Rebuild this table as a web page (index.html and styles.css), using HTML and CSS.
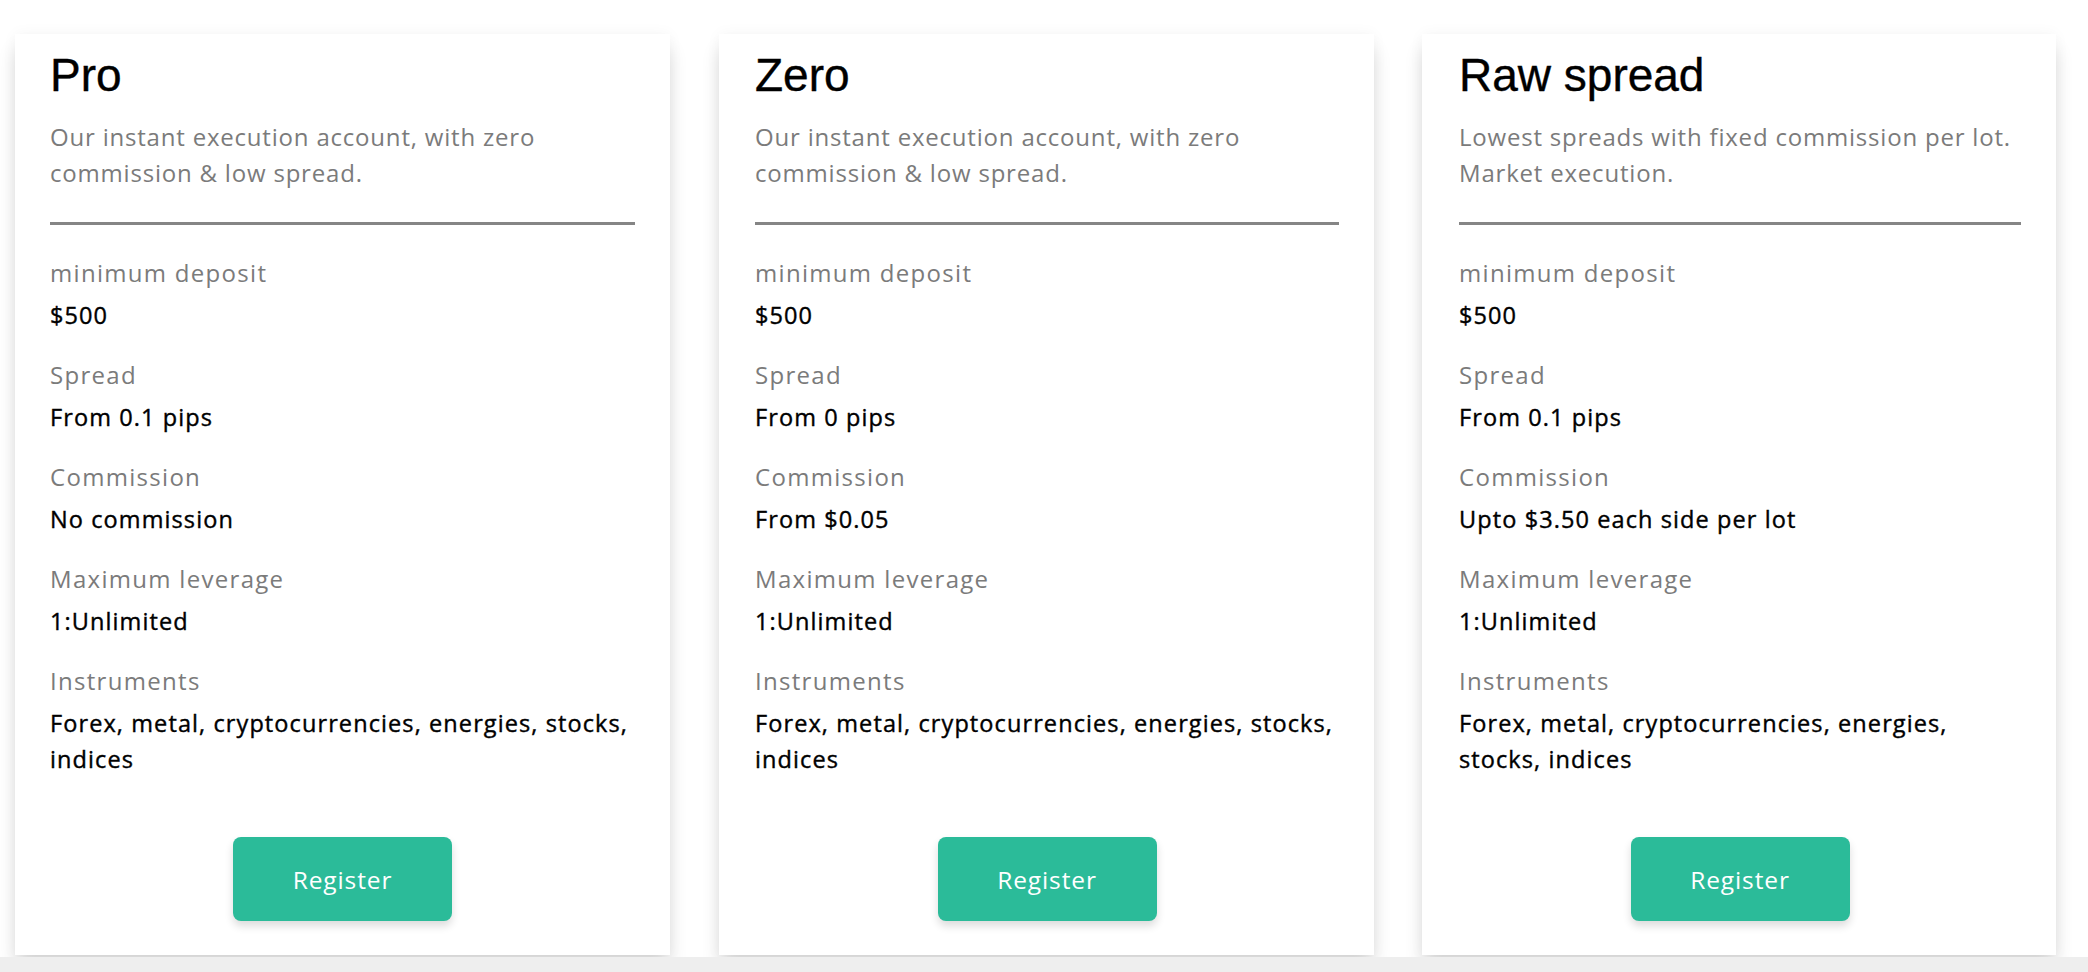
FILE: index.html
```html
<!DOCTYPE html>
<html lang="en">
<head>
<meta charset="utf-8">
<title>Accounts</title>
<link rel="stylesheet" href="styles.css">
</head>
<body>
<main class="cards">
  <section class="card">
    <h2 class="card-title">Pro</h2>
    <p class="card-desc">Our instant execution account, with zero commission &amp; low spread.</p>
    <hr class="card-rule">
    <dl class="specs">
      <dt class="spec-label">minimum deposit</dt>
      <dd class="spec-value">$500</dd>
      <dt class="spec-label">Spread</dt>
      <dd class="spec-value">From 0.1 pips</dd>
      <dt class="spec-label">Commission</dt>
      <dd class="spec-value">No commission</dd>
      <dt class="spec-label">Maximum leverage</dt>
      <dd class="spec-value">1:Unlimited</dd>
      <dt class="spec-label">Instruments</dt>
      <dd class="spec-value">Forex, metal, cryptocurrencies, energies, stocks, indices</dd>
    </dl>
    <div class="card-actions"><a class="btn" href="#">Register</a></div>
  </section>
  <section class="card">
    <h2 class="card-title">Zero</h2>
    <p class="card-desc">Our instant execution account, with zero commission &amp; low spread.</p>
    <hr class="card-rule">
    <dl class="specs">
      <dt class="spec-label">minimum deposit</dt>
      <dd class="spec-value">$500</dd>
      <dt class="spec-label">Spread</dt>
      <dd class="spec-value">From 0 pips</dd>
      <dt class="spec-label">Commission</dt>
      <dd class="spec-value">From $0.05</dd>
      <dt class="spec-label">Maximum leverage</dt>
      <dd class="spec-value">1:Unlimited</dd>
      <dt class="spec-label">Instruments</dt>
      <dd class="spec-value">Forex, metal, cryptocurrencies, energies, stocks, indices</dd>
    </dl>
    <div class="card-actions"><a class="btn" href="#">Register</a></div>
  </section>
  <section class="card">
    <h2 class="card-title">Raw spread</h2>
    <p class="card-desc">Lowest spreads with fixed commission per lot. Market execution.</p>
    <hr class="card-rule">
    <dl class="specs">
      <dt class="spec-label">minimum deposit</dt>
      <dd class="spec-value">$500</dd>
      <dt class="spec-label">Spread</dt>
      <dd class="spec-value">From 0.1 pips</dd>
      <dt class="spec-label">Commission</dt>
      <dd class="spec-value">Upto $3.50 each side per lot</dd>
      <dt class="spec-label">Maximum leverage</dt>
      <dd class="spec-value">1:Unlimited</dd>
      <dt class="spec-label">Instruments</dt>
      <dd class="spec-value">Forex, metal, cryptocurrencies, energies, stocks, indices</dd>
    </dl>
    <div class="card-actions"><a class="btn" href="#">Register</a></div>
  </section>
</main>
</body>
</html>
```
FILE: styles.css
```css
* { box-sizing: border-box; }

html, body {
  margin: 0;
  padding: 0;
}

body {
  background: #eeeeee;
  font-family: "Open Sans", "Noto Sans", sans-serif;
  color: #000;
  overflow: hidden;
}

.cards {
  display: grid;
  grid-template-columns: 655px 656px 634px;
  column-gap: 48px;
  padding: 34px 0 2px 15px;
  align-items: stretch;
  background: #ffffff;
}

.card {
  background: #fff;
  padding: 14px 35px 34px 35px;
  box-shadow: 0 14px 18px -2px rgba(0, 0, 0, 0.16), 0 0 14px rgba(0, 0, 0, 0.045);
  display: flex;
  flex-direction: column;
}

.card:nth-child(2) {
  margin-left: 1px;
  padding-left: 36px;
}

.card:nth-child(3) {
  padding-left: 37px;
}

.card-title {
  margin: 0;
  font-family: "Liberation Sans", Arial, sans-serif;
  font-weight: 400;
  font-size: 46px;
  line-height: 54px;
  color: #000;
  -webkit-text-stroke: 0.4px #000;
}

.card-desc {
  margin: 17px 0 0 0;
  font-size: 24px;
  line-height: 36px;
  letter-spacing: 0.8px;
  color: #7b7b7b;
}

.card-rule {
  margin: 31px 0 0 0;
  border: 0;
  height: 3px;
  background: #858585;
}

.specs {
  margin: 30px 0 0 0;
}

.spec-label {
  margin: 0;
  font-size: 24px;
  line-height: 36px;
  letter-spacing: 1.3px;
  color: #7b7b7b;
}

.spec-value {
  margin: 6px 0 24px 0;
  font-size: 23.5px;
  font-weight: 400;
  line-height: 36px;
  letter-spacing: 1.1px;
  color: #000;
  -webkit-text-stroke: 0.4px #000;
}

.spec-value:last-child {
  margin-bottom: 0;
}

.card-actions {
  margin-top: 60px;
  display: flex;
  justify-content: center;
}

.btn {
  display: flex;
  align-items: center;
  justify-content: center;
  width: 219px;
  height: 84px;
  border-radius: 8px;
  background: #2bbb99;
  color: #fff;
  font-size: 24.5px;
  letter-spacing: 0.9px;
  text-decoration: none;
  box-shadow: 0 5px 9px rgba(0, 0, 0, 0.14);
}
```
